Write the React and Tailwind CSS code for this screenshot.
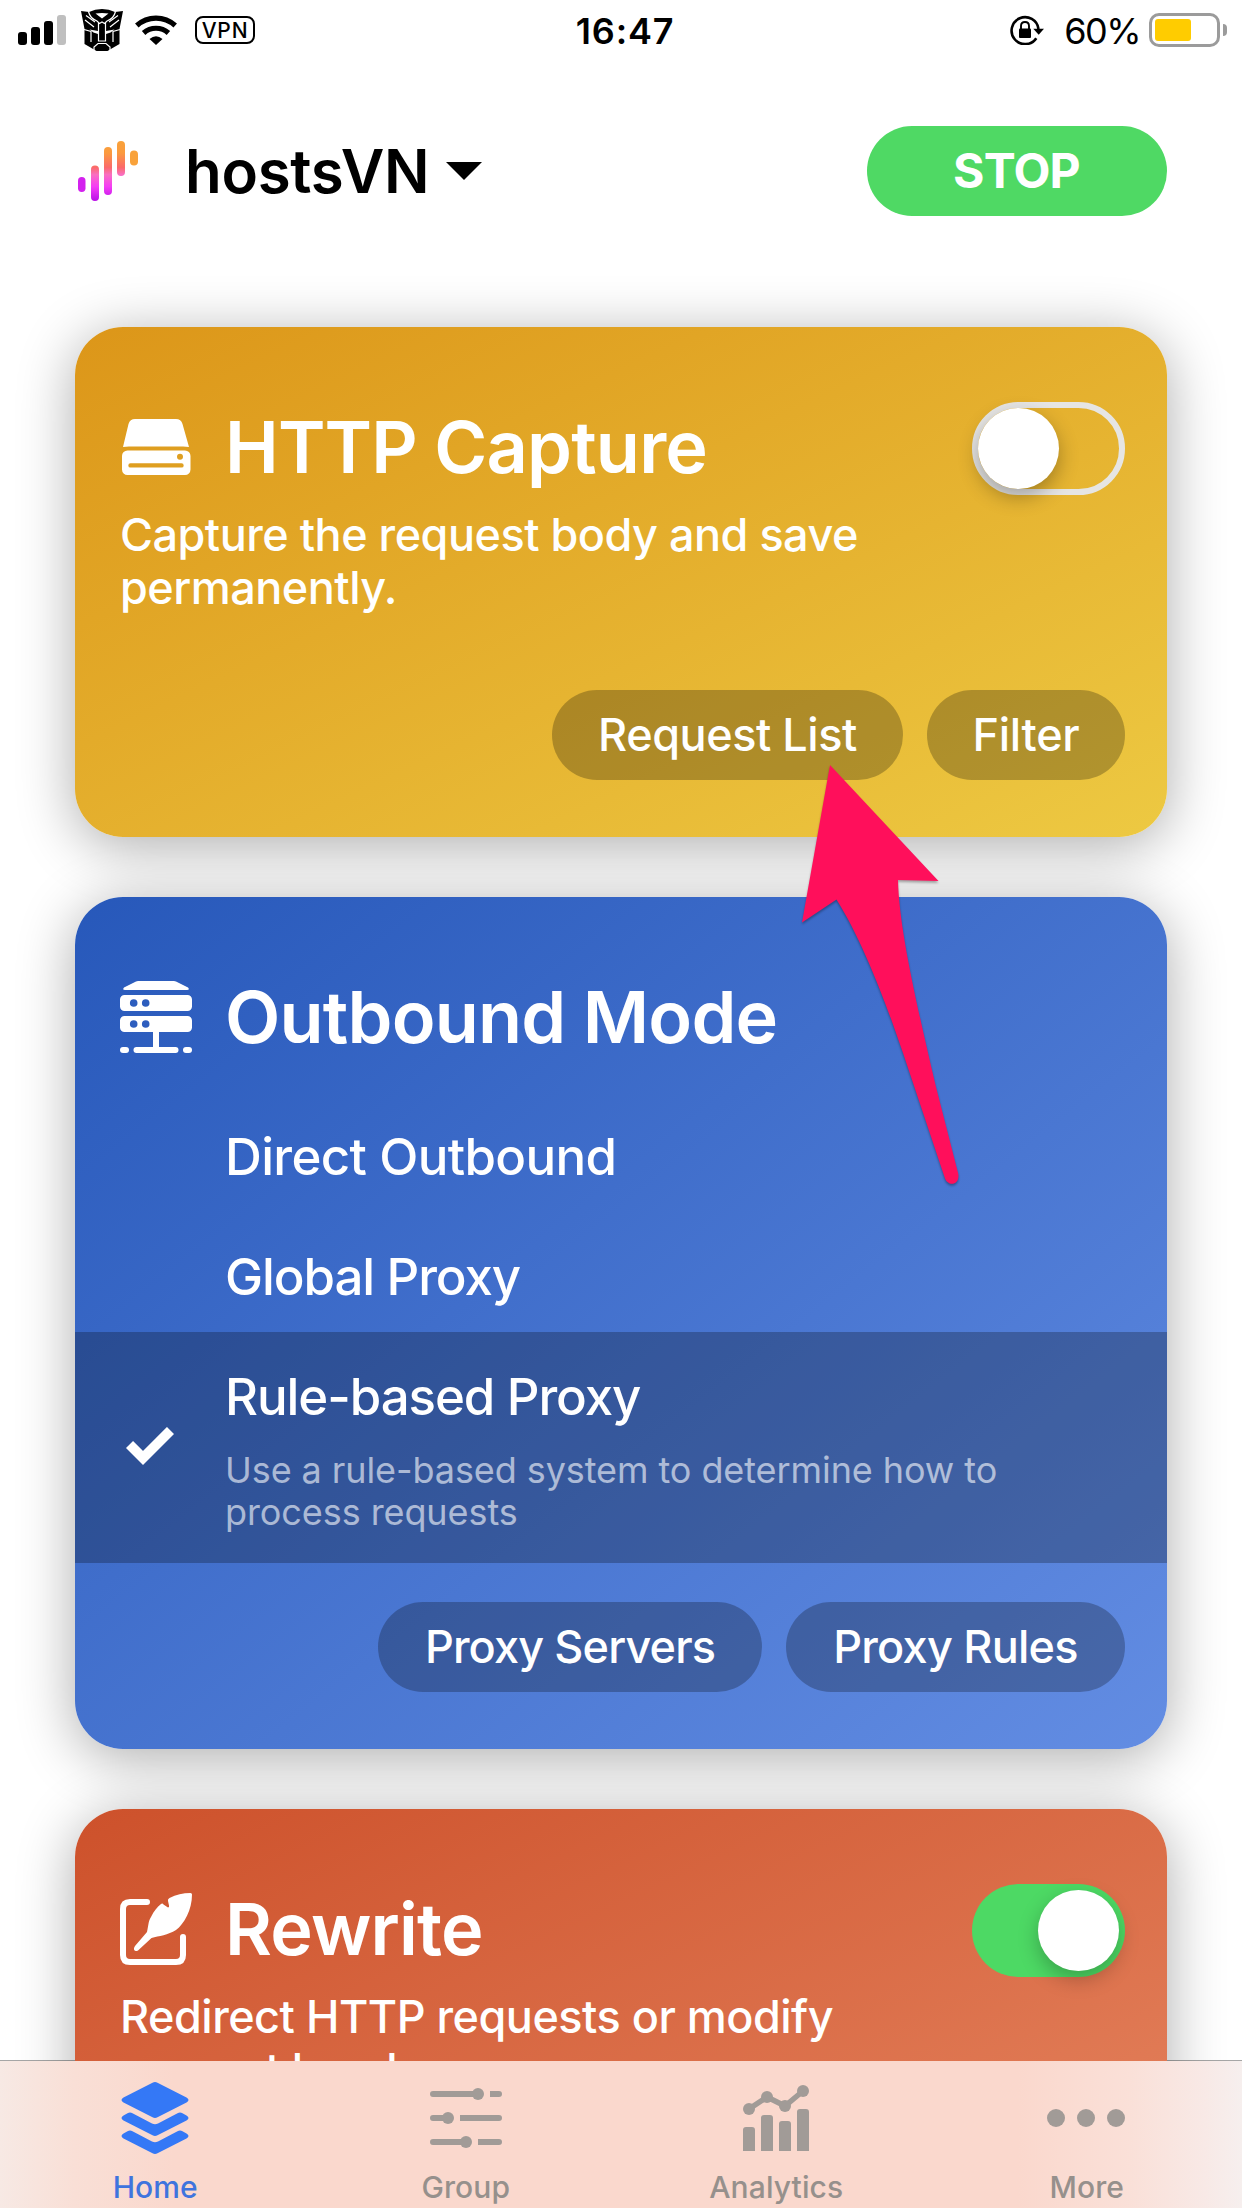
import React from "react";

/* ---------- status bar glyphs ---------- */

const SignalIcon = () => (
  <svg className="h-[30px] w-12" viewBox="0 0 48 30">
    <rect x="0" y="17" width="9" height="13" rx="3" />
    <rect x="13" y="12" width="9" height="18" rx="3" />
    <rect x="26" y="6" width="9" height="24" rx="3" />
    <rect x="39" y="0" width="9" height="30" rx="3" fill="#bfbfbf" />
  </svg>
);

const RobotIcon = () => (
  <svg className="h-[42px] w-[42px]" viewBox="0 0 42 42">
    <path d="M0 2 8 3Q14 0 21 0T34 3L42 2 38.5 20V35L29 40.5 26.5 42H15.5L13 40.500 3.500 35V20Z" />
    <g fill="none" stroke="#fff" strokeWidth="1.200">
      <path d="M7.500 2.500Q9 9.500 16 12L18.500 14.500 21 13 23.500 14.500 26 12Q33 9.500 34.500 2.500" />
      <path d="M5 6.500 14 13M4 11 13 18M38 11 29 18M37 6.500 28 13" />
      <path d="M3 20.500 10 22.500V33M39 20.500 32 22.500V33" />
      <path d="M17.500 14V32H24.500V14" />
      <path d="M13 41V38L17 34.500H25L29 38V41" />
    </g>
    <path d="M14.500 4.500Q21 3.500 27.500 4.500L21 9.500ZM8.500 20.500 17 22V25L12.500 23.500ZM33.500 20.500 25 22V25L29.500 23.500Z" fill="#fff" />
  </svg>
);

const WifiIcon = () => (
  <svg className="h-[30px] w-[42px]" viewBox="0 0 42 30">
    <g fill="none" stroke="#000" strokeWidth="5.200">
      <path d="M1.800 10.500A28.500 28.500 0 0 1 40.200 10.500" />
      <path d="M8.600 18A18.500 18.500 0 0 1 33.400 18" />
    </g>
    <path d="M14.500 24Q21 18.500 27.500 24L21 30Z" />
  </svg>
);

const RotationLockIcon = () => (
  <svg className="h-[30px] w-[34px]" viewBox="0 0 34 30">
    <path d="M26.300 23.200A13.500 13.500 0 1 1 28.500 14" fill="none" stroke="#000" strokeWidth="2.600" />
    <path d="M23.300 13.800H34L28.700 19.700Z" />
    <rect x="9" y="13.500" width="12" height="9.500" rx="1" />
    <path d="M11 14V11Q11 7 15 7T19 11V14" fill="none" stroke="#000" strokeWidth="1.900" />
  </svg>
);

const Battery = () => (
  <div className="flex items-center gap-[3px]">
    <div className="h-[34px] w-[71px] rounded-[10px] border-[3px] border-[#9b9b9b] p-[3px]">
      <div className="h-full w-[36px] rounded-[3px] bg-[#ffcc00]" />
    </div>
    <div className="h-3 w-1 rounded-r-full bg-[#9b9b9b]" />
  </div>
);

const StatusBar = () => (
  <div className="flex h-[60px] shrink-0 items-center pr-[15px] pl-[18px]">
    <div className="flex flex-1 items-center">
      <SignalIcon />
      <div className="ml-[15px]"><RobotIcon /></div>
      <div className="ml-3"><WifiIcon /></div>
      <div className="ml-[18px] flex h-[28px] w-[60px] items-center justify-center rounded-lg border-[2.500px] border-black text-[21px] leading-none font-medium tracking-[0.8px]">
        VPN
      </div>
    </div>
    <div className="pt-0.5 pl-[5px] text-[36px] leading-none font-semibold tracking-[0.800px]">16:47</div>
    <div className="flex flex-1 items-center justify-end">
      <RotationLockIcon />
      <div className="mr-[9px] ml-5 pt-0.5 text-[36px] leading-none tracking-[-1.500px]">60%</div>
      <Battery />
    </div>
  </div>
);

/* ---------- header ---------- */

const Logo = () => (
  <svg className="h-[60px] w-[60px]" viewBox="0 0 60 60">
    <defs>
      <linearGradient id="wave" x1="0" y1="0" x2="0" y2="60" gradientUnits="userSpaceOnUse">
        <stop offset="0" stopColor="#f9a23a" />
        <stop offset="0.2" stopColor="#fb9a3f" />
        <stop offset="0.44" stopColor="#fb6a6a" />
        <stop offset="0.56" stopColor="#f96fc0" />
        <stop offset="0.76" stopColor="#f53df5" />
        <stop offset="1" stopColor="#b80fe6" />
      </linearGradient>
    </defs>
    <g fill="url(#wave)">
      <rect x="0" y="36" width="7.500" height="15" rx="3.700" fill="#d322ee" />
      <rect x="13" y="24.500" width="8" height="35.500" rx="4" />
      <rect x="26" y="6" width="8" height="48" rx="4" />
      <rect x="39" y="0" width="8" height="35" rx="4" />
      <rect x="52" y="9.500" width="8" height="15" rx="4" fill="#f9a23a" />
    </g>
  </svg>
);

const Header = () => (
  <header className="mt-[66px] flex h-[90px] shrink-0 items-center pr-[75px] pl-[78px]">
    <Logo />
    <div className="ml-[47px] text-[60px] leading-none font-semibold tracking-[-0.300px]">hostsVN</div>
    <svg className="ml-[17px] h-[18px] w-9" viewBox="0 0 36 18">
      <path d="M0 0H36L18 18Z" />
    </svg>
    <button className="ml-auto h-[90px] w-[300px] rounded-full bg-[#4fd964] pr-px text-[48px] leading-none font-bold tracking-[-0.800px] text-white">
      STOP
    </button>
  </header>
);

/* ---------- card icons ---------- */

const DiskIcon = () => (
  <svg className="h-[72px] w-[72px]" viewBox="0 0 72 72" fill="#fff">
    <path d="M3 36 8.500 13Q10 8 15 8H56Q61 8 62.500 13L69 36Q66 35.500 63 35.500H9Q6 35.500 3 36Z" />
    <path
      fillRule="evenodd"
      d="M7.500 39.500H65A5.500 5.500 0 0 1 70.500 45V58.500A5.500 5.500 0 0 1 65 64H7.500A5.500 5.500 0 0 1 2 58.500V45A5.500 5.500 0 0 1 7.500 39.500ZM60 42.700A3 3 0 1 0 60 48.700 3 3 0 1 0 60 42.700ZM10.500 52.200A2.200 2.200 0 0 0 10.500 56.600H61.500A2.200 2.200 0 0 0 61.500 52.200Z"
    />
  </svg>
);

const ServerIcon = () => (
  <svg className="h-[72px] w-[72px]" viewBox="0 0 72 72" fill="#fff">
    <path d="M16 .5Q17 0 18 0H54Q55 0 56 .5L68 6.500Q70 9 67 9H5Q2 9 4 6.500Z" />
    <path
      fillRule="evenodd"
      d="M4.500 14H67.500A4.500 4.500 0 0 1 72 18.500V25.500A4.500 4.500 0 0 1 67.500 30H4.500A4.500 4.500 0 0 1 0 25.500V18.500A4.500 4.500 0 0 1 4.500 14ZM13.700 18.200A3.800 3.800 0 1 0 13.700 25.800 3.800 3.800 0 1 0 13.700 18.200ZM25.700 18.200A3.800 3.800 0 1 0 25.700 25.800 3.800 3.800 0 1 0 25.700 18.200Z"
    />
    <path
      fillRule="evenodd"
      d="M4.500 35H67.500A4.500 4.500 0 0 1 72 39.500V46.500A4.500 4.500 0 0 1 67.500 51H4.500A4.500 4.500 0 0 1 0 46.500V39.500A4.500 4.500 0 0 1 4.500 35ZM13.700 39.200A3.800 3.800 0 1 0 13.700 46.800 3.800 3.800 0 1 0 13.700 39.200ZM25.700 39.200A3.800 3.800 0 1 0 25.700 46.800 3.800 3.800 0 1 0 25.700 39.200Z"
    />
    <rect x="33" y="50" width="6" height="18" />
    <rect x="13.500" y="66" width="45" height="6" rx="3" />
    <rect x="0" y="66" width="9" height="6" rx="3" />
    <rect x="63" y="66" width="9" height="6" rx="3" />
  </svg>
);

const FeatherIcon = () => (
  <svg className="h-[72px] w-[72px]" viewBox="0 0 72 72" fill="#fff">
    <path
      d="M27 9H10Q3 9 3 16V62Q3 69 10 69H56Q63 69 63 62V44"
      fill="none"
      stroke="#fff"
      strokeWidth="6"
      strokeLinecap="round"
    />
    <path d="M70.500 0Q72 0 72 1.500C72 17 64 31 56 37C48 42 39 43 31.500 45L18 57.500Q15 59 14 56.500 13.500 55 15 53L27 39C28.500 33 28 29 31 24C34 18 37 14 41 11Q42.500 10 43.500 11.500L48 14.500Q49.500 14.500 49 12.500L48 8Q47.500 6 49.500 5C56 1.500 63 0 70.500 0Z" />
  </svg>
);

const CheckIcon = () => (
  <svg className="mb-[3px] ml-[6px] h-[39px] w-12" viewBox="0 0 48 39">
    <path d="M3.500 17.500 17 31 44.500 3.500" fill="none" stroke="#fff" strokeWidth="10" />
  </svg>
);

/* ---------- card parts ---------- */

const Toggle = ({ on }) =>
  on ? (
    <div className="flex h-[93px] w-[153px] items-center justify-end rounded-full bg-[#4dd964] px-[6px]">
      <div className="h-[81px] w-[81px] rounded-full bg-white shadow-[0_8px_20px_rgba(0,0,0,0.25)]" />
    </div>
  ) : (
    <div className="flex h-[93px] w-[153px] items-center rounded-full border-[6px] border-[#e6e5e3]">
      <div className="h-[81px] w-[81px] rounded-full bg-white shadow-[0_8px_20px_rgba(0,0,0,0.3)]" />
    </div>
  );

const TitleRow = ({ icon, title, children }) => (
  <div className="flex h-[93px] items-center pr-[42px] pl-[45px]">
    <div className="pb-[3px]">{icon}</div>
    <h2 className="ml-[33px] pb-[3px] text-[72px] leading-[86px] font-semibold tracking-[-0.800px] whitespace-nowrap">
      {title}
    </h2>
    <div className="ml-auto">{children}</div>
  </div>
);

const Description = ({ children }) => (
  <p className="mt-[13px] pl-[45px] text-[45px] leading-[53px] font-medium tracking-[-0.500px]">{children}</p>
);

const Pill = ({ className, children }) => (
  <button className={`h-[90px] rounded-full bg-black/25 pb-px text-[45px] leading-none font-medium ${className}`}>
    {children}
  </button>
);

const Card = ({ className, children }) => (
  <section
    className={`relative mx-[75px] shrink-0 rounded-[48px] pt-[75px] text-white before:absolute before:inset-0 before:-z-10 before:rounded-[48px] before:shadow-[0_9px_57px_rgba(0,0,0,0.33)] ${className}`}
  >
    {children}
  </section>
);

/* ---------- tab bar ---------- */

const LayersIcon = () => (
  <svg className="h-[72px] w-[72px]" viewBox="0 0 72 72" fill="#3478f6">
    <path d="M33.500.8Q36-.6 38.500.8L67.500 15.500Q71.500 18 67.500 20.500L38.500 35.200Q36 36.600 33.500 35.200L4.500 20.500Q.5 18 4.500 15.500Z" />
    <path d="M4.500 33.500 8.500 31.200Q11 30 13.500 31.200L33 41.600Q36 43 39 41.600L58.500 31.200Q61 30 63.500 31.200L67.500 33.500Q71.500 36 67.500 38.500L38.500 53.200Q36 54.600 33.500 53.200L4.500 38.500Q.5 36 4.500 33.500Z" />
    <path d="M4.500 51.500 8.500 49.200Q11 48 13.500 49.200L33 59.600Q36 61 39 59.600L58.500 49.200Q61 48 63.500 49.200L67.500 51.500Q71.500 54 67.500 56.500L38.500 71.200Q36 72.600 33.500 71.200L4.500 56.500Q.5 54 4.500 51.500Z" />
  </svg>
);

const SlidersIcon = () => (
  <svg className="h-[72px] w-[72px]" viewBox="0 0 72 72" fill="#a19b97">
    <path d="M3 9H48V15H3A3 3 0 0 1 3 9ZM60 9H69A3 3 0 0 1 69 15H60Z" />
    <path d="M3 33H18V39H3A3 3 0 0 1 3 33ZM30 33H69A3 3 0 0 1 69 39H30Z" />
    <path d="M3 57H36V63H3A3 3 0 0 1 3 57ZM48 57H69A3 3 0 0 1 69 63H48Z" />
    <circle cx="48" cy="12" r="6" />
    <circle cx="18" cy="36" r="6" />
    <circle cx="36" cy="60" r="6" />
  </svg>
);

const ChartIcon = () => (
  <svg className="h-[72px] w-[72px]" viewBox="0 0 72 72" fill="#a19b97">
    <path d="M9 27 27 15 45 24 63 9" fill="none" stroke="#a19b97" strokeWidth="5.500" />
    <circle cx="9" cy="27" r="6" />
    <circle cx="27" cy="15" r="6" />
    <circle cx="45" cy="24" r="6" />
    <circle cx="63" cy="9" r="6" />
    <path d="M3 69V48Q3 45 6 45H12Q15 45 15 48V69ZM21 69V36Q21 33 24 33H30Q33 33 33 36V69ZM39 69V42Q39 39 42 39H48Q51 39 51 42V69ZM57 69V30Q57 27 60 27H66Q69 27 69 30V69Z" />
  </svg>
);

const DotsIcon = () => (
  <svg className="mr-px h-[72px] w-[78px]" viewBox="0 0 78 72" fill="#a19b97">
    <circle cx="9" cy="36" r="9" />
    <circle cx="39" cy="36" r="9" />
    <circle cx="69" cy="36" r="9" />
  </svg>
);

const Tab = ({ icon, label, active }) => (
  <div className="flex flex-col items-center">
    {icon}
    <span
      className={`mt-[15px] text-[30px] leading-9 font-medium tracking-[0.100px] ${active ? "text-[#3f74de]" : "text-[#96908c]"}`}
    >
      {label}
    </span>
  </div>
);

const TabBar = () => (
  <nav className="h-[148px] shrink-0 border-t border-black/35 bg-[linear-gradient(90deg,#f7e9e4_0%,#f9dfd6_6%,#fad8cd_14%,#fad8cd_82%,#fae0d8_91%,#f8e9e6_97%,#f6efee_100%)] bg-clip-padding pt-[21px]">
    <div className="grid grid-cols-4">
      <Tab icon={<LayersIcon />} label="Home" active />
      <Tab icon={<SlidersIcon />} label="Group" />
      <Tab icon={<ChartIcon />} label="Analytics" />
      <Tab icon={<DotsIcon />} label="More" />
    </div>
  </nav>
);

/* Hand-drawn pointer that lies over the first two cards. */
const Pointer = () => (
  <svg
    className="pointer-events-none absolute top-[765px] left-[802px] z-10 h-[420px] w-[157px] drop-shadow-[0_2px_1px_rgba(0,0,0,0.3)]"
    viewBox="802 765 157 420"
    fill="#ff0f5b"
  >
    <path d="M830 765 938.500 881 898 880C899 930 918 1010 936 1087L958.300 1174C960 1186 947 1187 944.500 1177L903 1053C885 1000 862 940 836.500 899.500L802 922.500Z" />
  </svg>
);

export default function App() {
  return (
    <div className="relative flex h-[2208px] w-[1242px] flex-col overflow-hidden bg-white font-['Inter',sans-serif] text-black">
      <div className="isolate -mb-px flex min-h-0 flex-1 flex-col overflow-hidden">
        <StatusBar />
        <Header />

        <Card className="mt-[111px] h-[510px] bg-[linear-gradient(to_bottom_right,#dc9619,#edc942)]">
          <TitleRow icon={<DiskIcon />} title="HTTP Capture">
            <Toggle />
          </TitleRow>
          <Description>
            Capture the request body and save
            <br />
            permanently.
          </Description>
          <div className="mt-[76px] flex justify-end gap-6 pr-[42px]">
            <Pill className="w-[351px] tracking-[-0.450px]">Request List</Pill>
            <Pill className="w-[198px] tracking-[-0.250px]">Filter</Pill>
          </div>
        </Card>

        <Card className="mt-[60px] h-[852px] bg-[linear-gradient(to_bottom_right,#2758ba,#638de3)]">
          <TitleRow icon={<ServerIcon />} title="Outbound Mode" />
          <div className="mt-[27px] text-[51px] leading-[62px] font-medium">
            <div className="flex h-[120px] items-center pt-[10px] pl-[150px] tracking-[-0.650px]">Direct Outbound</div>
            <div className="flex h-[120px] items-center pt-[10px] pl-[150px] tracking-[-1.100px]">Global Proxy</div>
            <div className="flex h-[231px] items-center bg-black/25 pl-[45px]">
              <CheckIcon />
              <div className="ml-[51px] pt-1">
                <div className="tracking-[-1.080px]">Rule-based Proxy</div>
                <div className="mt-[21px] text-[36px] leading-[42px] font-normal tracking-[-0.080px] text-white/60">
                  Use a rule-based system to determine how to
                  <br />
                  process requests
                </div>
              </div>
            </div>
          </div>
          <div className="mt-[39px] flex justify-end gap-6 pr-[42px]">
            <Pill className="w-[384px] tracking-[-0.850px]">Proxy Servers</Pill>
            <Pill className="w-[339px] tracking-[-0.750px]">Proxy Rules</Pill>
          </div>
        </Card>

        <Card className="mt-[60px] h-[510px] bg-[linear-gradient(to_bottom_right,#cd512b,#e78863)]">
          <TitleRow icon={<FeatherIcon />} title="Rewrite">
            <Toggle on />
          </TitleRow>
          <Description>
            Redirect HTTP requests or modify
            <br />
            request headers.
          </Description>
        </Card>
      </div>

      <TabBar />
      <Pointer />
    </div>
  );
}
